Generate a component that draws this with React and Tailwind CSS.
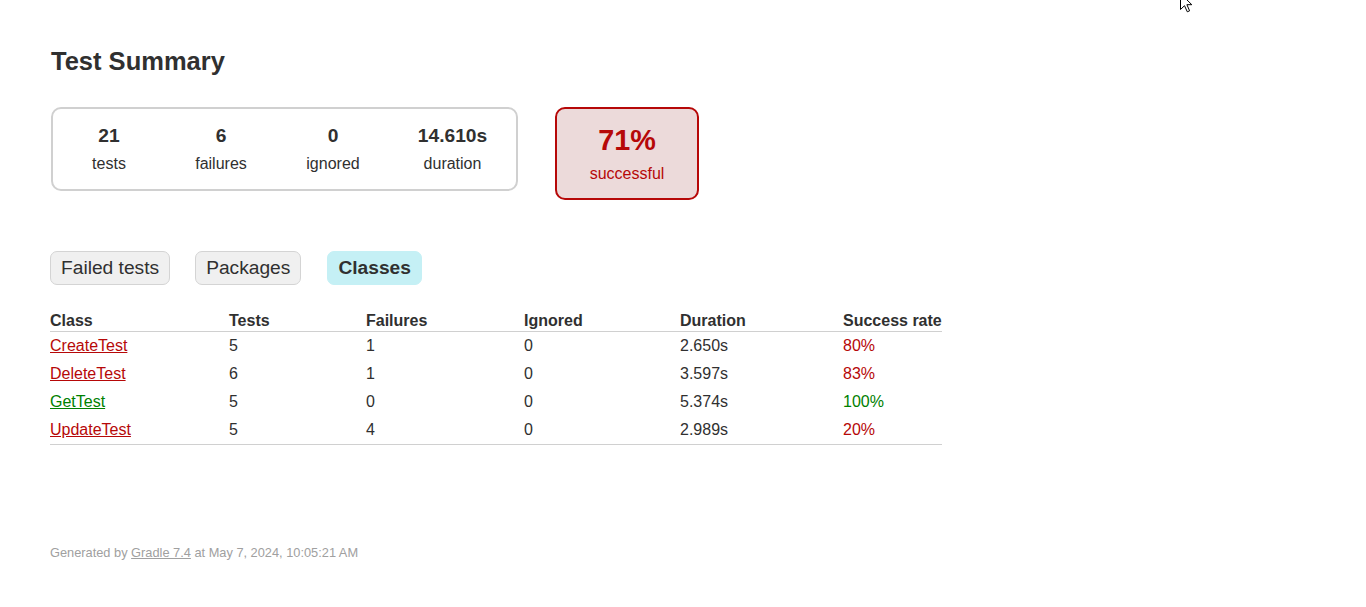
import React from "react";

const rows = [
  { name: "CreateTest", tests: 5, failures: 1, ignored: 0, duration: "2.650s", rate: "80%", ok: false },
  { name: "DeleteTest", tests: 6, failures: 1, ignored: 0, duration: "3.597s", rate: "83%", ok: false },
  { name: "GetTest", tests: 5, failures: 0, ignored: 0, duration: "5.374s", rate: "100%", ok: true },
  { name: "UpdateTest", tests: 5, failures: 4, ignored: 0, duration: "2.989s", rate: "20%", ok: false },
];

function InfoBox({ value, label, wide }) {
  return (
    <div className={`${wide ? "w-[127px]" : "w-[112px]"} px-px py-px`}>
      <div className="pt-[15px] pb-[15px] text-center">
        <div className="text-[19.2px] leading-[22px] font-bold mb-[8px]">{value}</div>
        <div className="text-[16px] leading-[18px]">{label}</div>
      </div>
    </div>
  );
}

export default function App() {
  const cols = "grid grid-cols-[179px_137px_158px_156px_163px_99px]";
  return (
    <div
      className="relative min-h-[607px] bg-white text-[#303030] text-[16px]"
      style={{ fontFamily: '"Liberation Sans", Arial, sans-serif' }}
    >
      <svg
        className="absolute left-[1180px] top-[-7px]"
        width="13"
        height="20"
        viewBox="0 0 13 20"
      >
        <path
          d="M0.5 0.5 L0.5 16.5 L4.5 12.7 L7.3 18.8 L9.6 17.8 L6.9 11.7 L11.8 11.7 Z"
          fill="#ffffff"
          stroke="#000000"
          strokeWidth="1"
          strokeLinejoin="miter"
        />
      </svg>

      <div className="pl-[50px] pt-[46px]">
        <h1 className="text-[25.5px] leading-[30px] font-bold m-0 ml-px">Test Summary</h1>

        <div className="flex items-start mt-[31px] ml-px">
          <div className="flex border-2 border-[#d0d0d0] rounded-[10px]">
            <InfoBox value="21" label="tests" />
            <InfoBox value="6" label="failures" />
            <InfoBox value="0" label="ignored" />
            <InfoBox value="14.610s" label="duration" wide />
          </div>
          <div className="ml-[37px] w-[144px] border-2 border-[#b60808] bg-[#ecdada] rounded-[10px] text-[#b60808] text-center pt-[15px] pb-[15px]">
            <div className="text-[28.8px] leading-[33px] font-bold mb-[8px]">71%</div>
            <div className="text-[16px] leading-[18px]">successful</div>
          </div>
        </div>

        <div className="flex mt-[51px]">
          <div className="mr-[25px] border border-[#d4d4d4] bg-[#f0f0f0] rounded-[7px] px-[10px] py-[5px] text-[19.2px] leading-[22px]">
            Failed tests
          </div>
          <div className="mr-[26px] border border-[#d4d4d4] bg-[#f0f0f0] rounded-[7px] px-[10px] py-[5px] text-[19.2px] leading-[22px]">
            Packages
          </div>
          <div className="border border-[#c5f0f5] bg-[#c5f0f5] rounded-[7px] px-[10px] py-[5px] text-[19.2px] leading-[22px] font-bold">
            Classes
          </div>
        </div>

        <div className="mt-[20px] w-[892px] leading-[18px]">
          <div className={`${cols} font-bold pt-[7px] pb-px border-b border-[#d0d0d0]`}>
            <div>Class</div>
            <div>Tests</div>
            <div>Failures</div>
            <div>Ignored</div>
            <div>Duration</div>
            <div className="whitespace-nowrap">Success rate</div>
          </div>
          {rows.map((r) => (
            <div key={r.name} className={`${cols} py-[5px]`}>
              <div>
                <a
                  href="#"
                  className={`underline ${r.ok ? "text-[#008000]" : "text-[#b60808]"}`}
                >
                  {r.name}
                </a>
              </div>
              <div>{r.tests}</div>
              <div>{r.failures}</div>
              <div>{r.ignored}</div>
              <div>{r.duration}</div>
              <div className={r.ok ? "text-[#008000]" : "text-[#b60808]"}>{r.rate}</div>
            </div>
          ))}
          <div className="border-b border-[#d0d0d0]" />
        </div>

        <div className="mt-[100px] text-[12.8px] leading-[15px] text-[#a0a0a0]">
          Generated by{" "}
          <a href="#" className="underline text-[#a0a0a0]">
            Gradle 7.4
          </a>{" "}
          at May 7, 2024, 10:05:21 AM
        </div>
      </div>
    </div>
  );
}
